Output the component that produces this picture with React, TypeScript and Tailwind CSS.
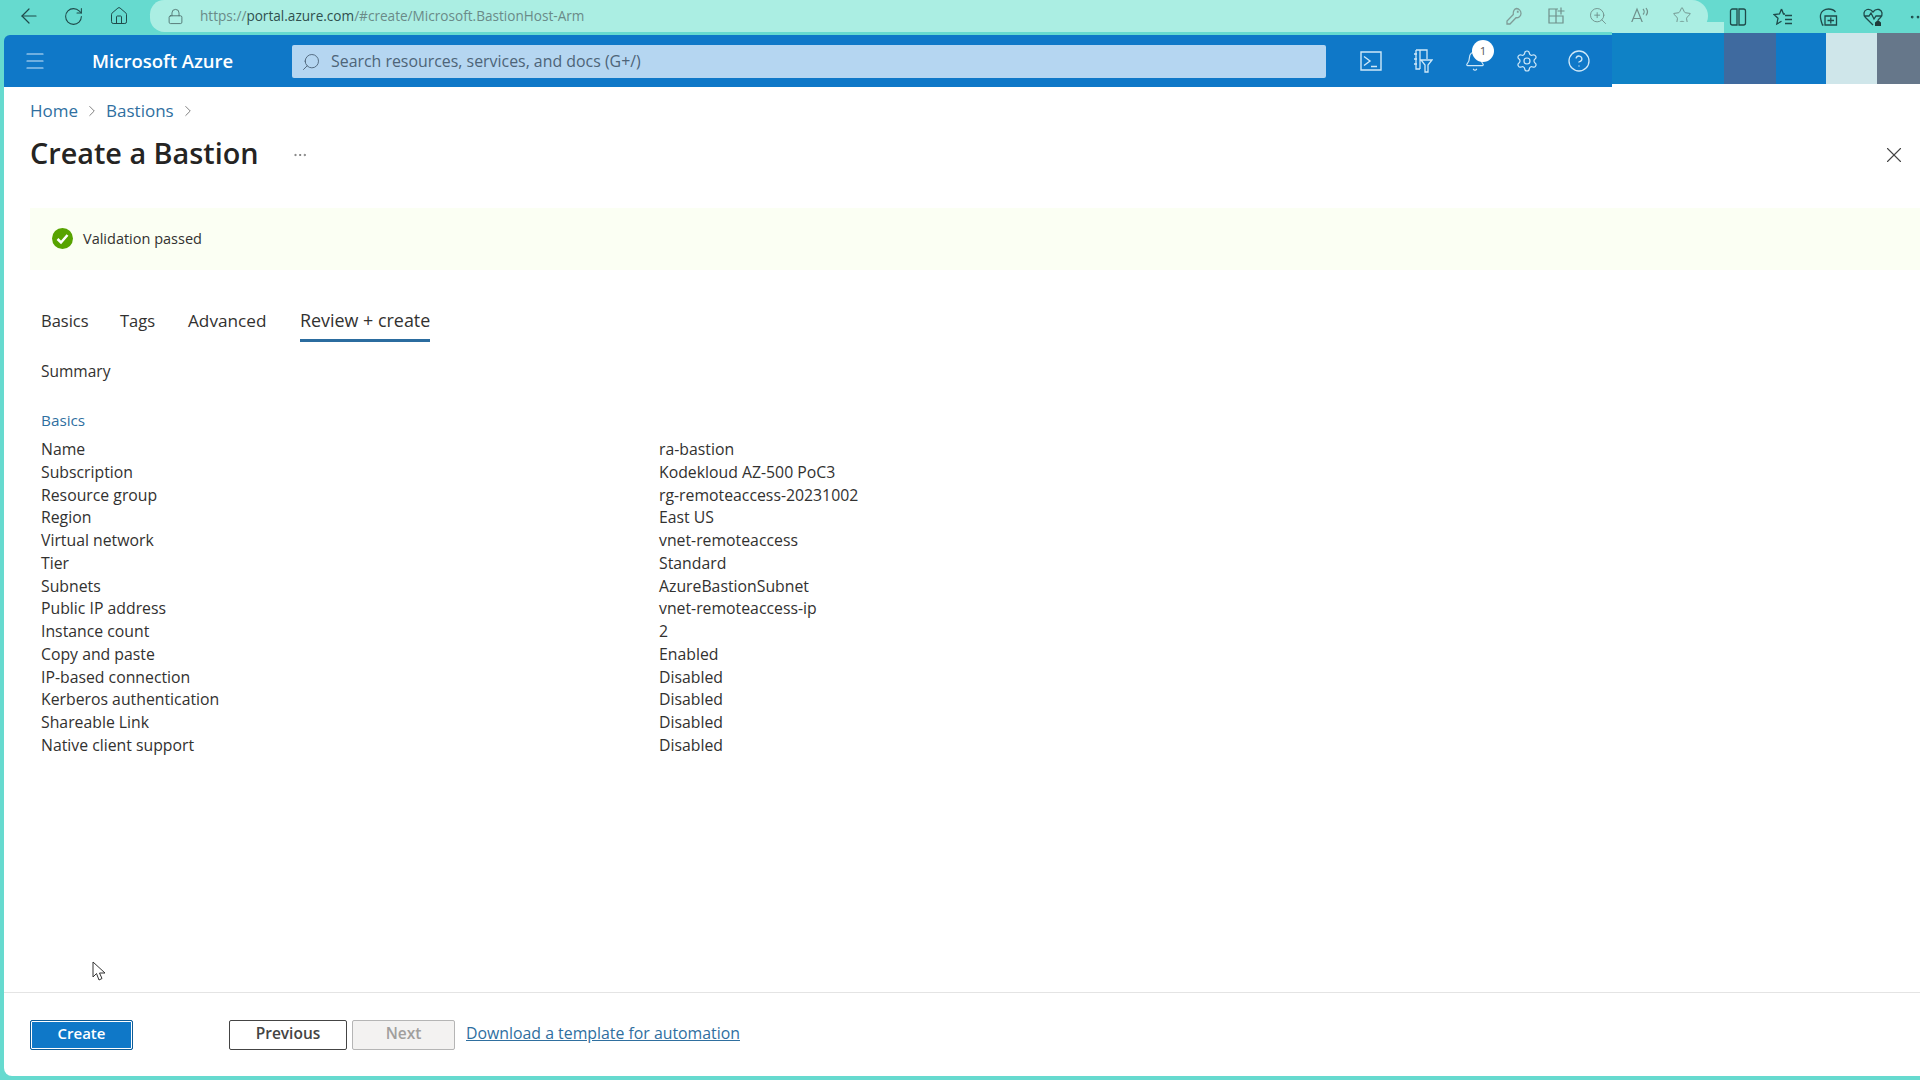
import { ArrowLeft, RotateCw, Home, Lock, ZoomIn, Star, Menu, Search, Bell, Settings, CircleHelp, ChevronRight, X, MoreHorizontal } from "lucide-react";

const rows = [
	["Name", "ra-bastion"],
	["Subscription", "Kodekloud AZ-500 PoC3"],
	["Resource group", "rg-remoteaccess-20231002"],
	["Region", "East US"],
	["Virtual network", "vnet-remoteaccess"],
	["Tier", "Standard"],
	["Subnets", "AzureBastionSubnet"],
	["Public IP address", "vnet-remoteaccess-ip"],
	["Instance count", "2"],
	["Copy and paste", "Enabled"],
	["IP-based connection", "Disabled"],
	["Kerberos authentication", "Disabled"],
	["Shareable Link", "Disabled"],
	["Native client support", "Disabled"],
];

function KeyIcon() {
	return (
		<svg width="20" height="20" viewBox="0 0 20 20" fill="none" stroke="#7f9c97" strokeWidth="1.3">
			<path d="M12.500 2.500a5 5 0 0 1 4.500 5c0 2.500-2.500 4.500-5 4.200L6 18H3v-3l6.300-6.500c-.5-3 1-5.700 3.200-6zM13.500 5.500h.5v.5h-.5z" />
		</svg>
	);
}

function AppAddIcon() {
	return (
		<svg width="20" height="20" viewBox="0 0 20 20" fill="none" stroke="#6f8f8a" strokeWidth="1.2">
			<path d="M3 3h7v14H3zM3 10h14v7H10M10 3h2M15 1.500v7M11.500 5h7" />
		</svg>
	);
}

function ReadAloudIcon() {
	return (
		<svg width="22" height="20" viewBox="0 0 22 20" fill="none" stroke="#6f8f8a" strokeWidth="1.2">
			<path d="M2 18 8 3l6 15M4.500 12.500h7M14 3c1.500 1.500 1.500 4 0 5.500M17 2c2 2.500 2 5 0 7.500" />
		</svg>
	);
}

function SplitIcon() {
	return (
		<svg width="18" height="20" viewBox="0 0 18 20" fill="none" stroke="#1f4a4a" strokeWidth="1.3">
			<path d="M8 2H3.500A2 2 0 0 0 1.500 4v12a2 2 0 0 0 2 2H8zM10 2h4.500a2 2 0 0 1 2 2v12a2 2 0 0 1-2 2H10z" />
		</svg>
	);
}

function FavoritesIcon() {
	return (
		<svg width="20" height="20" viewBox="0 0 20 20" fill="none" stroke="#1f4a4a" strokeWidth="1.3">
			<path d="M8.500 2 10.500 7H12M8.500 2 6.500 7l-5.500.5 4 3.800L3.800 17l4.700-2.700M12 8.500h7M12 12.500h7M12 16.500h7" />
		</svg>
	);
}

function CollectionsIcon() {
	return (
		<svg width="20" height="20" viewBox="0 0 20 20" fill="none" stroke="#1f4a4a" strokeWidth="1.3">
			<path d="M5.500 18h-1C3 14 2 11 2.500 8 3 4 7 2 10.500 2c3 0 5.500 1 7 3M7 9h11.500v9H7zM12.800 10.500v6M9.500 13.500h6.500" />
		</svg>
	);
}

function HealthIcon() {
	return (
		<svg width="22" height="20" viewBox="0 0 22 20" fill="none" stroke="#1f4a4a" strokeWidth="1.3">
			<path d="M11 18 3.500 10.500C1 8 1.500 3.500 5 2.500c2.500-.7 4.500.5 6 2.500 1.500-2 3.500-3.200 6-2.500 3.500 1 4 5.500 1.500 8L16 13M2 9h5l2-3 3 6 2-3h6" />
			<path d="M13 15.500l3-2.500 3 2.500V19h-6z" fill="#1f3a3a" stroke="none" />
		</svg>
	);
}

function TerminalBoxIcon() {
	return (
		<svg width="22" height="20" viewBox="0 0 22 20" fill="none" stroke="#cfe8f8" strokeWidth="1.4">
			<path d="M1 1h20v18H1zM4 5.500l6 4.500-6 4.500M11 15.500h6" />
		</svg>
	);
}

function DirectoryFilterIcon() {
	return (
		<svg width="20" height="24" viewBox="0 0 20 24" fill="none" stroke="#cfe8f8" strokeWidth="1.3">
			<path d="M3 1h11v9M3 1v19h4M1 5h3M1 10h3M1 15h3M7 1v19M8 11h11l-4 5v7h-3v-7z" />
		</svg>
	);
}

function CursorIcon() {
	return (
		<svg width="14" height="21" viewBox="0 0 14 21" fill="#ffffff" stroke="#333333" strokeWidth="1">
			<path d="M1 1v15l3.500-3.500L7 19l3-1.500-2.500-5.500H13z" />
		</svg>
	);
}

function NavIcon({ children }: { children: React.ReactNode }) {
	return <div className="flex h-[32px] w-[45px] shrink-0 items-center justify-center">{children}</div>;
}

function PillIcon({ children }: { children: React.ReactNode }) {
	return <div className="flex w-[42px] shrink-0 items-center justify-center">{children}</div>;
}

function HeaderIcon({ children }: { children: React.ReactNode }) {
	return <div className="relative flex h-full w-[52px] shrink-0 items-center justify-center">{children}</div>;
}

export default function App() {
	return (
		<div className="relative flex h-screen w-full flex-col overflow-hidden bg-[#66dacf] font-['Open_Sans',sans-serif] text-[#323130]">
			<div className="relative flex h-[33px] shrink-0 items-start pl-[6px]">
				<NavIcon><ArrowLeft size={24} strokeWidth={1.2} color="#1f4a4a" /></NavIcon>
				<NavIcon><RotateCw size={21} strokeWidth={1.2} color="#1f4a4a" /></NavIcon>
				<NavIcon><Home size={20} strokeWidth={1.2} color="#1f4a4a" /></NavIcon>
				<div className="ml-[9px] flex h-[32px] w-[1558px] shrink-0 items-center rounded-r-[18px] rounded-l-[16px] bg-[#abeee3] pl-[17px] pr-[5px]">
					<Lock size={17} strokeWidth={1.2} color="#4a6a68" />
					<span className="ml-[16px] text-[13.600px] text-[#6a8a88]">
						https://<span className="text-[#30504e]">portal.azure.com</span>/#create/Microsoft.BastionHost-Arm
					</span>
					<div className="ml-auto flex">
						<PillIcon><KeyIcon /></PillIcon>
						<PillIcon><AppAddIcon /></PillIcon>
						<PillIcon><ZoomIn size={20} strokeWidth={1.1} color="#6f8f8a" /></PillIcon>
						<PillIcon><ReadAloudIcon /></PillIcon>
						<PillIcon><Star size={20} strokeWidth={1.1} color="#6f8f8a" /></PillIcon>
					</div>
				</div>
				<div className="ml-[7px] flex h-[33px] items-center">
					<NavIcon><SplitIcon /></NavIcon>
					<NavIcon><FavoritesIcon /></NavIcon>
					<NavIcon><CollectionsIcon /></NavIcon>
					<NavIcon><HealthIcon /></NavIcon>
					<NavIcon><MoreHorizontal size={20} strokeWidth={1.3} color="#1f4a4a" /></NavIcon>
				</div>
				<div className="absolute left-[1612px] top-[22px] h-[11px] w-[112px] bg-[#abeee3]" />
			</div>

			<div className="ml-[4px] mb-[4px] flex min-h-0 flex-1 flex-col rounded-bl-[8px] bg-white">
				<div className="flex h-[54px] shrink-0 bg-white">
					<div className="h-full w-[1608px] shrink-0 bg-[#66dacf] pt-[2px]">
						<div className="flex h-[52px] items-start rounded-tl-[6px] bg-[#0f78c8]">
							<div className="flex h-full w-[62px] shrink-0 items-center justify-center">
								<Menu size={24} strokeWidth={1.2} color="#cfe6f7" />
							</div>
							<div className="flex h-full w-[226px] shrink-0 items-center pl-[26px] text-[18.500px] font-semibold text-white">
								Microsoft Azure
							</div>
							<div className="mt-[10px] flex h-[33px] w-[1034px] shrink-0 items-center rounded-[2px] bg-[#b5d6f1] pl-[9px] text-[#4d6478]">
								<Search size={20} strokeWidth={1.1} className="-scale-x-100" />
								<span className="ml-[10px] text-[15.900px]">Search resources, services, and docs (G+/)</span>
							</div>
							<div className="ml-[19px] flex h-full">
								<HeaderIcon><TerminalBoxIcon /></HeaderIcon>
								<HeaderIcon><DirectoryFilterIcon /></HeaderIcon>
								<HeaderIcon>
									<Bell size={22} strokeWidth={1.3} color="#cfe8f8" />
									<span className="absolute left-[23px] top-[5px] flex h-[22px] w-[22px] items-center justify-center rounded-full bg-white text-[11.500px] text-[#555555]">1</span>
								</HeaderIcon>
								<HeaderIcon><Settings size={24} strokeWidth={1.2} color="#cfe8f8" /></HeaderIcon>
								<HeaderIcon><CircleHelp size={24} strokeWidth={1.3} color="#cfe8f8" /></HeaderIcon>
							</div>
						</div>
					</div>
					<div className="flex h-[51px] flex-1">
						<div className="w-[112px] bg-[#0f82c6]" />
						<div className="w-[52px] bg-[#3f6a9f]" />
						<div className="w-[50px] bg-[#0f7ac8]" />
						<div className="w-[51px] bg-[#cfe6ea]" />
						<div className="flex-1 bg-[#66778a]" />
					</div>
				</div>

				<div className="flex min-h-0 flex-1 flex-col pl-[26px]">
					<div className="mt-[12px] flex h-[24px] items-center text-[17px] text-[#2f6f9f]">
						<span>Home</span>
						<ChevronRight size={18} strokeWidth={1} color="#555555" className="mx-[5px]" />
						<span>Bastions</span>
						<ChevronRight size={18} strokeWidth={1} color="#555555" className="ml-[5px]" />
					</div>
					<div className="mt-[10px] flex h-[40px] items-center pr-[13px]">
						<h1 className="text-[28.800px] font-semibold text-[#252423]">Create a Bastion</h1>
						<MoreHorizontal size={16} strokeWidth={1} color="#555555" className="ml-[33px] mt-[3px]" />
						<X size={26} strokeWidth={1} color="#444444" className="ml-auto mt-[3px]" />
					</div>
					<div className="mt-[35px] flex h-[62px] items-center bg-[#fbfff3] pl-[22px]">
						<svg width="21" height="21" viewBox="0 0 21 21" className="-mt-[1px]">
							<circle cx="10.500" cy="10.500" r="10.500" fill="#57a300" />
							<path d="M5.500 11l3.500 3.500 6.500-7.500" fill="none" stroke="#ffffff" strokeWidth="2.500" />
						</svg>
						<span className="ml-[10px] text-[14.500px]">Validation passed</span>
					</div>
					<div className="mt-[31px] flex h-[41px] pl-[11px] text-[16.500px]">
						<div className="-mt-[1px] flex w-[79px] items-center">Basics</div>
						<div className="-mt-[1px] flex w-[68px] items-center">Tags</div>
						<div className="-mt-[1px] flex w-[112px] items-center text-[17.200px]">Advanced</div>
						<div className="flex items-center border-b-[3px] border-[#2b6c9f] pt-[1px] text-[17.900px] font-medium">Review + create</div>
					</div>
					<div className="mt-[18px] pl-[11px] text-[15.500px] leading-[22px]">Summary</div>
					<div className="mt-[27px] pl-[11px] text-[15.300px] leading-[22px] text-[#2f6f9f]">Basics</div>
					<div className="mt-[7px] grid auto-rows-[22.750px] grid-cols-[618px_1fr] pl-[11px] text-[15.800px] leading-[22.750px]">
						{rows.map(([label, value]) => (
							<div key={label} className="contents">
								<span>{label}</span>
								<span>{value}</span>
							</div>
						))}
					</div>
				</div>

				<div className="flex h-[84px] shrink-0 items-center border-t border-[#e4e4e4] pl-[26px]">
					<button className="h-[30px] w-[103px] rounded-[2px] border border-[#0f5c97] bg-[#0f78c8] pb-[2px] text-[15px] font-semibold text-white shadow-[inset_0_0_0_1px_#ffffff]">Create</button>
					<button className="ml-[96px] h-[30px] w-[118px] rounded-[2px] border border-[#444444] bg-white pb-[2px] text-[15.500px] font-semibold text-[#444444]">Previous</button>
					<button className="ml-[5px] h-[30px] w-[103px] rounded-[2px] border border-[#b5b5b5] bg-[#f3f2f1] pb-[2px] text-[15.500px] font-semibold text-[#a19f9d]">Next</button>
					<a className="ml-[11px] pb-[2px] text-[15.850px] text-[#2f6f9f] underline">Download a template for automation</a>
				</div>
			</div>

			<div className="absolute left-[92px] top-[961px]"><CursorIcon /></div>
		</div>
	);
}
